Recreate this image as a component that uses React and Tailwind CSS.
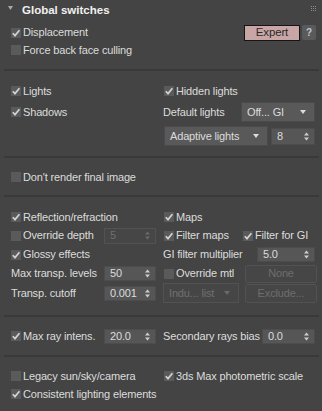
import React from 'react';

const font = { fontFamily: '"Liberation Sans", Arial, sans-serif' };

function Check({ checked, label, className = '' }) {
  return (
    <div className={`flex items-center ${className}`}>
      <div className="w-[10px] h-[10px] bg-[#5a5a5a] flex items-center justify-center shrink-0">
        {checked && (
          <svg width="10" height="10" viewBox="0 0 10 10">
            <path d="M1.8 5.2 L4 7.6 L8.4 2.2" fill="none" stroke="#d2d2d2" strokeWidth="1.7" />
          </svg>
        )}
      </div>
      <span className="ml-[2px] whitespace-nowrap">{label}</span>
    </div>
  );
}

function Arrows({ disabled }) {
  const c = disabled ? '#6a6a6a' : '#cfcfcf';
  return (
    <svg width="5" height="9" viewBox="0 0 5 9" className="shrink-0">
      <path d="M0 3.5 L2.5 0.5 L5 3.5 Z" fill={c} />
      <path d="M0 5.5 L2.5 8.5 L5 5.5 Z" fill={c} />
    </svg>
  );
}

function Spinner({ value, disabled, className = '' }) {
  return (
    <div
      className={`h-[15px] flex items-center justify-between pl-[5px] pr-[5px] border ${
        disabled ? 'bg-[#464646] border-[#525252] text-[#6e6e6e]' : 'bg-[#565656] border-[#4c4c4c] text-[#dcdcdc]'
      } ${className}`}
    >
      <span>{value}</span>
      <Arrows disabled={disabled} />
    </div>
  );
}

function Dropdown({ value, disabled, className = '' }) {
  return (
    <div
      className={`h-[20px] flex items-center justify-between pl-[5px] pr-[8px] border ${
        disabled ? 'bg-[#464646] border-[#525252] text-[#707070]' : 'bg-[#595959] border-[#4a4a4a] text-[#dcdcdc]'
      } ${className}`}
    >
      <span className="whitespace-nowrap">{value}</span>
      <svg width="6" height="4" viewBox="0 0 6 4">
        <path d="M0 0 L6 0 L3 4 Z" fill={disabled ? '#6a6a6a' : '#dcdcdc'} />
      </svg>
    </div>
  );
}

function Btn({ label, className = '' }) {
  return (
    <div
      className={`h-[18px] flex items-center justify-center border border-[#525252] bg-[#464646] text-[#6e6e6e] rounded-[2px] ${className}`}
    >
      {label}
    </div>
  );
}

function Sep() {
  return <div className="h-[2px] bg-[#393939] ml-[4px] mr-[3px]" />;
}

function Row({ h, left, right }) {
  return (
    <div className={`grid grid-cols-[152px_153px] items-center ${h}`}>
      <div className="flex items-center h-full">{left}</div>
      <div className="flex items-center h-full">{right}</div>
    </div>
  );
}

export default function App() {
  return (
    <div
      className="w-[322px] h-[411px] bg-[#444444] text-[#dcdcdc] text-[11px] tracking-[-0.15px] overflow-hidden"
      style={font}
    >
      {/* header */}
      <div className="h-[21px] flex items-center pl-[8px] pr-[6px] relative">
        <svg width="5" height="4" viewBox="0 0 5 4" className="mb-[5px]">
          <path d="M0 0 L5 0 L2.5 4 Z" fill="#a8a8a8" />
        </svg>
        <span className="ml-[9px] font-bold text-[11.5px] text-[#f0f0f0] tracking-normal">Global switches</span>
        <div className="ml-auto grid grid-cols-3 gap-[1px] mb-[4px]">
          {Array.from({ length: 9 }).map((_, i) => (
            <div key={i} className="w-[1px] h-[1px] bg-[#8a8a8a]" />
          ))}
        </div>
      </div>

      <div className="pl-[11px] pr-[6px] pt-[3px] pb-[10px]">
        <Row
          h="h-[17px]"
          left={<Check checked label="Displacement" />}
          right={
            <div className="flex items-center justify-end w-full gap-[2px]">
              <div className="w-[56px] h-[16px] bg-[#c9a6a6] border border-[#151515] text-[#2a2a2a] flex items-center justify-center text-[11.5px]">
                Expert
              </div>
              <div className="w-[14px] h-[15px] bg-[#5a5a5a] rounded-[2px] flex items-center justify-center text-[#bcc6d2] text-[10px] font-bold">
                ?
              </div>
            </div>
          }
        />
        <Row h="h-[18px]" left={<Check label="Force back face culling" />} right={null} />
      </div>
      <Sep />

      <div className="pl-[11px] pr-[6px] pt-[11px] pb-[10px]">
        <Row h="h-[18px]" left={<Check checked label="Lights" />} right={<Check checked label="Hidden lights" className="ml-[1px]" />} />
        <Row
          h="h-[20px] mt-[2px]"
          left={<Check checked label="Shadows" />}
          right={
            <div className="flex items-center justify-between w-full">
              <span>Default lights</span>
              <Dropdown value="Off... GI" className="w-[74px] mr-[1px]" />
            </div>
          }
        />
        <Row
          h="h-[20px] mt-[4px]"
          left={null}
          right={
            <div className="flex items-center justify-between w-full">
              <Dropdown value="Adaptive lights" className="w-[104px] ml-[1px]" />
              <Spinner value="8" className="w-[44px] h-[17px] mr-[1px]" />
            </div>
          }
        />
      </div>
      <Sep />

      <div className="pl-[11px] pr-[6px] pt-[10px] pb-[9px]">
        <Row h="h-[18px]" left={<Check label="Don't render final image" />} right={null} />
      </div>
      <Sep />

      <div className="pl-[11px] pr-[6px] pt-[11px] pb-[12px]">
        <Row h="h-[18px]" left={<Check checked label="Reflection/refraction" />} right={<Check checked label="Maps" className="ml-[1px]" />} />
        <Row
          h="h-[19px]"
          left={
            <div className="flex items-center justify-between w-full pr-[7px]">
              <Check label="Override depth" />
              <Spinner value="5" disabled className="w-[52px] h-[16px]" />
            </div>
          }
          right={
            <div className="flex items-center w-full">
              <Check checked label="Filter maps" className="ml-[1px] w-[79px]" />
              <Check checked label="Filter for GI" />
            </div>
          }
        />
        <Row
          h="h-[19px]"
          left={<Check checked label="Glossy effects" />}
          right={
            <div className="flex items-center justify-between w-full">
              <span>GI filter multiplier</span>
              <Spinner value="5.0" className="w-[58px] mr-[1px]" />
            </div>
          }
        />
        <Row
          h="h-[19px]"
          left={
            <div className="flex items-center justify-between w-full pr-[7px]">
              <span>Max transp. levels</span>
              <Spinner value="50" className="w-[52px]" />
            </div>
          }
          right={
            <div className="flex items-center justify-between w-full">
              <Check label="Override mtl" className="ml-[1px]" />
              <Btn label="None" className="w-[72px] mr-[-1px]" />
            </div>
          }
        />
        <Row
          h="h-[20px]"
          left={
            <div className="flex items-center justify-between w-full pr-[7px]">
              <span>Transp. cutoff</span>
              <Spinner value="0.001" className="w-[52px]" />
            </div>
          }
          right={
            <div className="flex items-center justify-between w-full">
              <Dropdown value="Indu... list" disabled className="w-[76px] h-[19px]" />
              <Btn label="Exclude..." className="w-[72px] h-[19px] mr-[-1px]" />
            </div>
          }
        />
      </div>
      <Sep />

      <div className="pl-[11px] pr-[6px] pt-[10px] pb-[10px]">
        <Row
          h="h-[18px]"
          left={
            <div className="flex items-center justify-between w-full pr-[7px]">
              <Check checked label="Max ray intens." />
              <Spinner value="20.0" className="w-[52px]" />
            </div>
          }
          right={
            <div className="flex items-center justify-between w-full">
              <span>Secondary rays bias</span>
              <Spinner value="0.0" className="w-[53px] mr-[1px]" />
            </div>
          }
        />
      </div>
      <Sep />

      <div className="pl-[11px] pr-[6px] pt-[10px]">
        <Row h="h-[18px]" left={<Check label="Legacy sun/sky/camera" />} right={<Check checked label="3ds Max photometric scale" className="ml-[1px]" />} />
        <Row h="h-[18px]" left={<Check checked label="Consistent lighting elements" />} right={null} />
      </div>
    </div>
  );
}
